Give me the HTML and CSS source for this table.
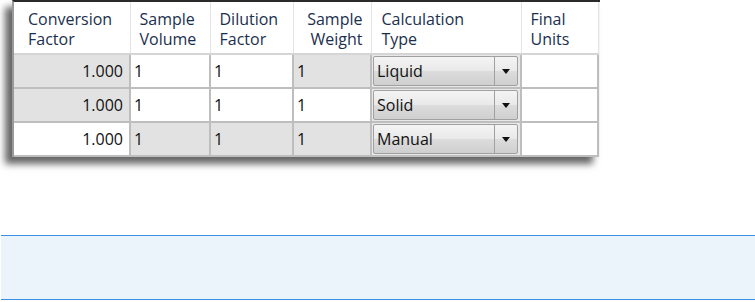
FILE: index.html
```html
<!DOCTYPE html>
<html lang="en">
<head>
  <meta charset="UTF-8">
  <title>Calculation Grid</title>
  <link rel="stylesheet" href="styles.css">
</head>
<body>
  <div class="shot">
    <table class="grid">
      <colgroup>
        <col class="c-conv">
        <col class="c-vol">
        <col class="c-dil">
        <col class="c-wt">
        <col class="c-calc">
        <col class="c-units">
      </colgroup>
      <tr class="head">
        <th>Conversion<br>Factor</th>
        <th>Sample<br>Volume</th>
        <th>Dilution<br>Factor</th>
        <th class="right">Sample<br>Weight</th>
        <th>Calculation<br>Type</th>
        <th>Final<br>Units</th>
      </tr>
      <tr>
        <td class="num grey">1.000</td>
        <td>1</td>
        <td>1</td>
        <td class="grey">1</td>
        <td class="pick"><div class="combo"><span>Liquid</span><b></b></div></td>
        <td></td>
      </tr>
      <tr>
        <td class="num grey">1.000</td>
        <td>1</td>
        <td>1</td>
        <td>1</td>
        <td class="pick"><div class="combo"><span>Solid</span><b></b></div></td>
        <td></td>
      </tr>
      <tr>
        <td class="num">1.000</td>
        <td class="grey">1</td>
        <td class="grey">1</td>
        <td class="grey">1</td>
        <td class="pick"><div class="combo"><span>Manual</span><b></b></div></td>
        <td></td>
      </tr>
    </table>
  </div>

  <div class="note"></div>
</body>
</html>
```

FILE: styles.css
```css
body {
  margin: 0;
  background: #fff;
  font-family: 'Open Sans', 'Noto Sans', sans-serif;
}

.shot {
  width: 586px;
  margin-left: 12px;
  border-top: 2px solid #2a2a2a;
  border-left: 2px solid #9a9a9a;
  background: #f4f4f4;
  box-shadow: -7px 7px 7px rgba(0, 0, 0, 0.6);
}

.grid {
  border-collapse: collapse;
  table-layout: fixed;
  width: 584px;
  font-size: 16px;
  color: #111;
}

.c-conv { width: 116px; }
.c-vol { width: 80px; }
.c-dil { width: 83px; }
.c-wt { width: 78px; }
.c-calc { width: 150px; }
.c-units { width: 77px; }

.grid th {
  font-weight: normal;
  text-align: left;
  vertical-align: top;
  color: #1b2f4e;
  background: #fff;
  line-height: 20px;
  height: 52px;
  padding: 7px 4px 0 12px;
  box-sizing: border-box;
  border-right: 1px solid #e4e4e4;
  border-bottom: 2px solid #d5d5d5;
}

.grid th:first-child { padding-left: 14px; }
.grid th:nth-child(2) { padding-left: 9px; }
.grid th:nth-child(3) { padding-left: 9px; }
.grid th:nth-child(5) { padding-left: 10px; }
.grid th:nth-child(6) { padding-left: 9px; }
.grid th.right { text-align: right; padding-right: 8px; }

.grid td {
  height: 34px;
  padding: 0 3px;
  box-sizing: border-box;
  background: #fff;
  border: 2px solid #bebebe;
  border-top: 0;
  border-left: 0;
}

.grid td.grey { background: #e2e2e2; }
.grid td.num { text-align: right; padding-right: 6px; }

.grid td.pick {
  padding: 1px 2px 1px 1px;
  background: #e8e8e8;
}

.combo {
  display: flex;
  height: 30px;
  border: 1px solid #a0a0a0;
  border-radius: 2px;
  background: linear-gradient(#f4f4f4, #e9e9e9 50%, #dcdcdc 51%, #cfcfcf);
  box-sizing: border-box;
}

.combo span {
  flex: 1;
  padding-left: 3px;
  line-height: 28px;
}

.combo b {
  width: 22px;
  border-left: 1px solid #a0a0a0;
  position: relative;
}

.combo b::after {
  content: "";
  position: absolute;
  left: 7px;
  top: 12px;
  border-left: 4px solid transparent;
  border-right: 4px solid transparent;
  border-top: 5px solid #111;
}

.note {
  margin: 78px 0 0 1px;
  height: 63px;
  background: #ebf3fb;
  border-top: 1px solid #3a8ee6;
  border-bottom: 1px solid #3a8ee6;
}
```
